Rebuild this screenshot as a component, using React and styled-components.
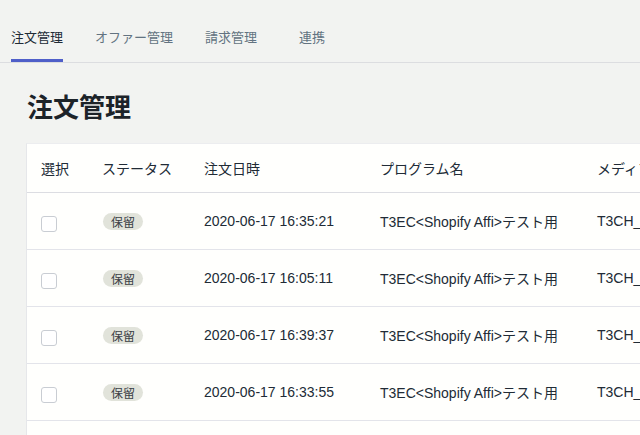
import React from 'react'
import styled, { createGlobalStyle } from 'styled-components'

const GlobalStyle = createGlobalStyle`
  html, body {
    margin: 0;
    padding: 0;
    background: #f2f3f1;
    overflow: hidden;
  }
  body {
    font-family: "Liberation Sans", "Noto Sans CJK JP", sans-serif;
    color: #212b36;
  }
`

const tabs = ['注文管理', 'オファー管理', '請求管理', '連携']

const orders = [
  { date: '2020-06-17 16:35:21', program: 'T3EC<Shopify Affi>テスト用', media: 'T3CH_item' },
  { date: '2020-06-17 16:05:11', program: 'T3EC<Shopify Affi>テスト用', media: 'T3CH_item' },
  { date: '2020-06-17 16:39:37', program: 'T3EC<Shopify Affi>テスト用', media: 'T3CH_item' },
  { date: '2020-06-17 16:33:55', program: 'T3EC<Shopify Affi>テスト用', media: 'T3CH_item' },
  { date: '2020-06-17 16:12:08', program: 'T3EC<Shopify Affi>テスト用', media: 'T3CH_item' },
]

export default function App() {
  return (
    <Page>
      <GlobalStyle />
      <TabBar>
        {tabs.map((t, i) => (
          <Tab key={t} last={i === tabs.length - 1}>
            <TabLabel active={i === 0}>{t}</TabLabel>
          </Tab>
        ))}
      </TabBar>

      <Title>注文管理</Title>

      <Card>
        <HeadRow>
          <Cell>選択</Cell>
          <Cell>ステータス</Cell>
          <Cell>注文日時</Cell>
          <Cell>プログラム名</Cell>
          <Cell>メディア名</Cell>
        </HeadRow>
        {orders.map((o, i) => (
          <Row key={i}>
            <Cell><Checkbox /></Cell>
            <Cell><Badge>保留</Badge></Cell>
            <Cell>{o.date}</Cell>
            <Cell>{o.program}</Cell>
            <Cell>{o.media}</Cell>
          </Row>
        ))}
      </Card>
    </Page>
  )
}

const Page = styled.div`
  width: 640px;
  height: 435px;
  overflow: hidden;
`

const TabBar = styled.div`
  display: flex;
  height: 63px;
  padding-left: 11px;
  gap: 32px;
  border-bottom: 1px solid #dcdde0;
  box-sizing: border-box;
`

const Tab = styled.div`
  display: flex;
  margin-left: ${p => (p.last ? '10px' : '0')};
`

const TabLabel = styled.div`
  display: flex;
  align-items: center;
  height: 100%;
  box-sizing: border-box;
  padding-top: 14px;
  font-size: 13px;
  color: ${p => (p.active ? '#212b36' : '#637381')};
  border-bottom: 3px solid ${p => (p.active ? '#4f5fc9' : 'transparent')};
`

const Title = styled.h1`
  margin: 0;
  padding: 28px 0 0 27px;
  height: 80px;
  box-sizing: border-box;
  font-size: 26px;
  font-weight: 700;
  line-height: 34px;
  color: #1c2329;
`

const Card = styled.div`
  margin-left: 26px;
  width: 760px;
  background: #fffffd;
  border-left: 1px solid #e6e7ea;
  border-top: 1px solid #ecedef;
`

const cols = '61px 102px 176px 217px 1fr'

const HeadRow = styled.div`
  display: grid;
  grid-template-columns: ${cols};
  align-items: center;
  height: 48px;
  padding-left: 14px;
  font-size: 14px;
  color: #212b36;
  border-bottom: 1px solid #dcdde2;
`

const Row = styled.div`
  display: grid;
  grid-template-columns: ${cols};
  align-items: center;
  height: 57px;
  padding-left: 14px;
  font-size: 14px;
  color: #212b36;
  border-bottom: 1px solid #e3e4ea;
  box-sizing: border-box;
`

const Cell = styled.div`
  display: flex;
  align-items: center;
  white-space: nowrap;
`

const Checkbox = styled.span`
  display: block;
  width: 14px;
  height: 14px;
  margin-top: 6px;
  border: 1px solid #c9cdd3;
  border-radius: 3px;
  background: #fff;
`

const Badge = styled.span`
  display: inline-flex;
  align-items: center;
  justify-content: center;
  height: 17px;
  padding: 0 8px;
  margin-left: 1px;
  border-radius: 9px;
  background: #e1e3da;
  font-size: 12px;
  color: #3b4046;
`
